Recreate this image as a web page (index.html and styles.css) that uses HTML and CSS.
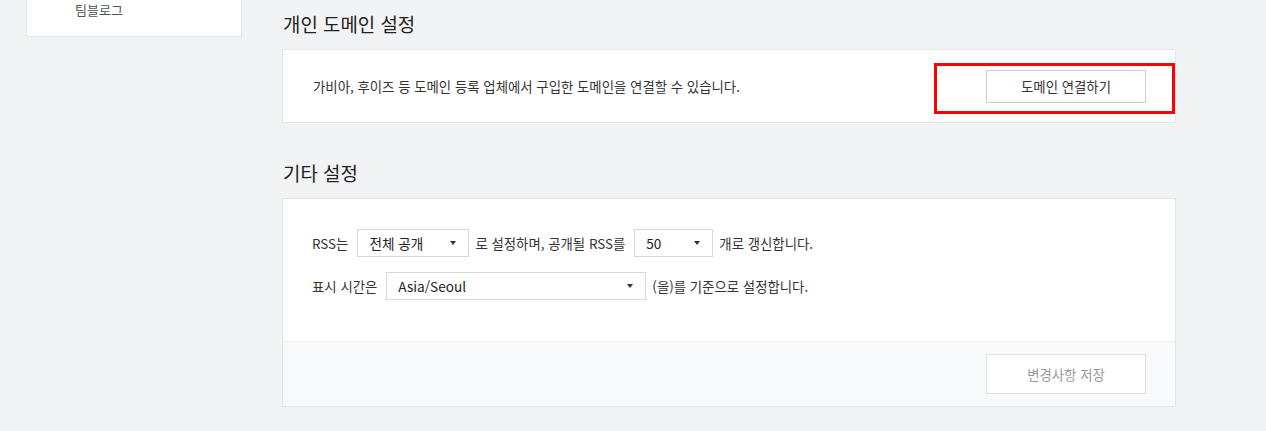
FILE: index.html
```html
<!DOCTYPE html>
<html lang="ko">
<head>
<meta charset="utf-8">
<title>블로그 설정</title>
<link rel="stylesheet" href="styles.css">
</head>
<body>
<div class="page">
  <aside class="side">
    <div class="side-card">
      <a class="side-link">팀블로그</a>
    </div>
  </aside>
  <main class="main">
    <h2 class="title">개인 도메인 설정</h2>
    <section class="card domain">
      <p class="desc">가비아, 후이즈 등 도메인 등록 업체에서 구입한 도메인을 연결할 수 있습니다.</p>
      <div class="btn-wrap">
        <button class="btn">도메인 연결하기</button>
        <span class="highlight"></span>
      </div>
    </section>

    <h2 class="title title-2">기타 설정</h2>
    <section class="card etc">
      <div class="etc-body">
        <div class="row">
          <span>RSS는</span>
          <span class="select sel-open">전체 공개<i class="caret"></i></span>
          <span>로 설정하며, 공개될 RSS를</span>
          <span class="select sel-count">50<i class="caret"></i></span>
          <span>개로 갱신합니다.</span>
        </div>
        <div class="row">
          <span>표시 시간은</span>
          <span class="select sel-tz">Asia/Seoul<i class="caret"></i></span>
          <span>(을)를 기준으로 설정합니다.</span>
        </div>
      </div>
      <div class="etc-foot">
        <button class="btn btn-save">변경사항 저장</button>
      </div>
    </section>
  </main>
</div>
</body>
</html>
```
FILE: styles.css
```css
html, body {
  margin: 0;
  padding: 0;
  background: #f2f3f5;
  font-family: "Noto Sans CJK KR", "Noto Sans", sans-serif;
  color: #333;
  font-size: 13.4px;
}
.page {
  display: flex;
  align-items: flex-start;
  padding-left: 26px;
}
.side {
  width: 216px;
  flex: none;
}
.side-card {
  background: #fff;
  border: 1px solid #e3e6ec;
  border-top: none;
  height: 37px;
  box-sizing: border-box;
  padding-left: 48px;
}
.side-link {
  display: block;
  line-height: 20px;
  color: #555;
  font-size: 13px;
}
.main {
  margin-left: 40px;
  width: 894px;
  flex: none;
  padding-top: 11px;
}
.title {
  margin: 0 0 12px 1px;
  font-size: 18.9px;
  font-weight: 400;
  line-height: 26px;
  color: #222;
}
.title-2 {
  margin-top: 37px;
}
.card {
  background: #fff;
  border: 1px solid #e3e6ec;
}
.domain {
  display: flex;
  align-items: center;
  justify-content: space-between;
  height: 72px;
  padding: 0 29px 0 30px;
}
.desc {
  margin: 0;
  line-height: 20px;
}
.btn-wrap {
  position: relative;
}
.btn {
  display: block;
  width: 160px;
  height: 33px;
  background: #fff;
  border: 1px solid #c9ced6;
  font-family: inherit;
  font-size: 13.4px;
  color: #333;
  padding: 0;
}
.highlight {
  position: absolute;
  left: -52px;
  top: -7px;
  right: -29px;
  bottom: -11px;
  border: 3px solid #ff0000;
  pointer-events: none;
}
.etc-body {
  padding: 30px 30px 41px 29px;
  display: flex;
  flex-direction: column;
  gap: 15px;
}
.row {
  display: flex;
  align-items: center;
  line-height: 20px;
}
.select {
  position: relative;
  box-sizing: border-box;
  height: 28px;
  margin: 0 6px 0 9px;
  border: 1px solid #d4d8df;
  background: #fff;
  padding-left: 11px;
  line-height: 26px;
  color: #222;
  font-size: 13.6px;
}
.sel-open { width: 112px; }
.sel-count { width: 79px; }
.sel-tz { width: 260px; }
.caret {
  position: absolute;
  right: 12px;
  top: 11px;
  width: 0;
  height: 0;
  border-left: 3.5px solid transparent;
  border-right: 3.5px solid transparent;
  border-top: 4px solid #333;
}
.etc-foot {
  background: #f8f9fb;
  border-top: 1px solid #edf0f3;
  padding: 12px 29px 12px 0;
  display: flex;
  justify-content: flex-end;
}
.btn-save {
  height: 40px;
  border-color: #e0e3e9;
  color: #999;
}
```
